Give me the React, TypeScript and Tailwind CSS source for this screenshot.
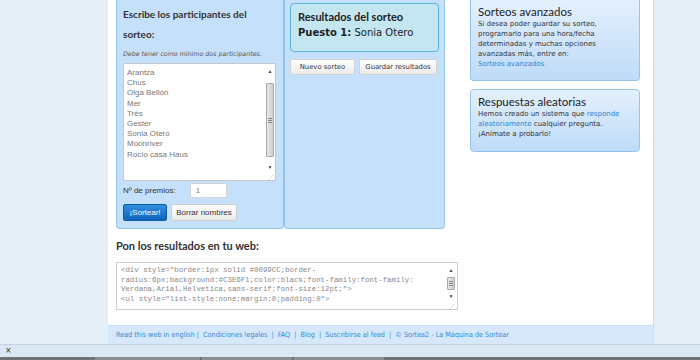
import React from 'react'

// Sorteo page, scrolled view: panels, side boxes, embed code and footer

const names = ['Arantza', 'Chus', 'Olga Bellón', 'Mer', 'Très', 'Gester', 'Sonia Otero', 'Moonriver', 'Rocío casa Haus']

const codeLines = [
  '<div style="border:1px solid #0099CC;border-',
  'radius:6px;background:#C3E6F1;color:black;font-family:font-family:',
  'Verdana,Arial,Helvetica,sans-serif;font-size:12pt;">',
  '<ul style="list-style:none;margin:0;padding:0">',
]

function ScrollBar({ thumbTop, thumbH, total }: { thumbTop: number; thumbH: number; total: number }) {
  return (
    <div className="flex w-[10px] flex-col items-center" style={{ height: total }}>
      <div className="flex h-[10px] w-[10px] items-center justify-center text-[5px] leading-none text-[#444]">▲</div>
      <div className="relative w-[10px] flex-1">
        <div
          className="absolute left-[1px] right-[1px] flex items-center justify-center rounded-[1px] border border-[#a9a9a9] bg-gradient-to-r from-[#e8e8e8] to-[#cfcfcf]"
          style={{ top: thumbTop, height: thumbH }}
        >
          <div className="flex flex-col gap-[1px]">
            <div className="h-[1px] w-[4px] bg-[#888]" />
            <div className="h-[1px] w-[4px] bg-[#888]" />
            <div className="h-[1px] w-[4px] bg-[#888]" />
          </div>
        </div>
      </div>
      <div className="flex h-[10px] w-[10px] items-center justify-center text-[5px] leading-none text-[#444]">▼</div>
      <div className="flex h-[8px] w-[10px] items-end justify-end pr-[1px] text-[6px] leading-none text-[#aaa]">⋰</div>
    </div>
  )
}

export default function App() {
  const verdana = { fontFamily: '"DejaVu Sans", Verdana, sans-serif' }
  const head = { fontFamily: 'Lato, "Open Sans", sans-serif' }
  const arial = { fontFamily: '"Liberation Sans", Arial, sans-serif' }

  return (
    <div className="flex h-[360px] w-[700px] flex-col overflow-hidden bg-[#e4eef7]">
      <div className="flex h-[344px]">
        <div className="w-[108px]" />
        <div className="flex w-[546px] flex-col border-r border-[#c9def2] bg-white">
          {/* main */}
          <div className="flex h-[325px] flex-col pl-[8px]">
            <div className="flex">
              {/* participantes */}
              <div className="flex h-[229px] w-[168px] flex-col rounded-b-[4px] border border-t-0 border-[#94c3ec] bg-[#c5e0fa] px-[6px]">
                <div className="pt-[4px] text-[10px] font-bold leading-[20px] text-[#333]" style={head}>
                  Escribe los participantes del
                  <br />
                  sorteo:
                </div>
                <div className="mt-[5px] whitespace-nowrap text-[6.3px] italic leading-[10px] text-[#555]" style={verdana}>
                  Debe tener como mínimo dos participantes.
                </div>
                <div className="mt-[4px] flex h-[118px] w-[153px] border border-[#c8c8c8] bg-white">
                  <div className="flex-1 pl-[3px] pt-[4px] text-[8px] leading-[10.2px] text-[#777]" style={arial}>
                    {names.map((n) => (
                      <div key={n}>{n}</div>
                    ))}
                  </div>
                  <div className="pt-[2px]">
                    <ScrollBar thumbTop={7} thumbH={74} total={114} />
                  </div>
                </div>
                <div className="mt-[2px] flex items-center gap-[14px]" style={arial}>
                  <span className="text-[8px] text-[#333]">Nº de premios:</span>
                  <div className="flex h-[15px] w-[37px] items-center border border-[#d4d4d4] bg-white pl-[5px] text-[8px] text-[#888]">1</div>
                </div>
                <div className="mt-[6px] flex gap-[4px]" style={arial}>
                  <div className="flex h-[17px] w-[44px] items-center justify-center rounded-[2px] border border-[#0d5aa8] bg-gradient-to-b from-[#2f8ee0] to-[#0f63bd] text-[8px] text-white">
                    ¡Sortear!
                  </div>
                  <div className="flex h-[17px] w-[66px] items-center justify-center rounded-[2px] border border-[#cfcfcf] bg-gradient-to-b from-white to-[#e9e9e9] text-[8px] text-[#333]">
                    Borrar nombres
                  </div>
                </div>
              </div>
              {/* resultados */}
              <div className="flex h-[229px] w-[161px] flex-col rounded-b-[4px] border border-t-0 border-[#94c3ec] bg-[#c5e0fa] px-[5px] pt-[3px]">
                <div className="flex h-[49px] flex-col rounded-[4px] border border-[#5db6dd] bg-[#c3e6f1] px-[7px] pt-[6px] text-[#222]">
                  <div className="text-[11px] font-bold leading-[14px]" style={head}>
                    Resultados del sorteo
                  </div>
                  <div className="mt-[2px] text-[10px] leading-[14px]" style={verdana}>
                    <b>Puesto 1:</b> Sonia Otero
                  </div>
                </div>
                <div className="mt-[7px] flex gap-[4px]" style={verdana}>
                  <div className="flex h-[16px] w-[65px] items-center justify-center rounded-[2px] border border-[#d2d2d2] bg-gradient-to-b from-white to-[#ebebeb] text-[6.8px] text-[#333]">
                    Nuevo sorteo
                  </div>
                  <div className="flex h-[16px] w-[78px] items-center justify-center rounded-[2px] border border-[#d2d2d2] bg-gradient-to-b from-white to-[#ebebeb] text-[6.8px] text-[#333]">
                    Guardar resultados
                  </div>
                </div>
              </div>
              <div className="w-[25px]" />
              {/* side */}
              <div className="flex w-[170px] flex-col gap-[8px]">
                <div className="h-[81px] rounded-b-[4px] border border-t-0 border-[#96c4ee] bg-gradient-to-b from-[#e3f0fd] to-[#bedbf8] px-[7px] pt-[5px]">
                  <div className="text-[11.5px] leading-[14px] text-[#222]" style={head}>
                    Sorteos avanzados
                  </div>
                  <div className="text-[7px] leading-[10px] text-[#333]" style={verdana}>
                    Si desea poder guardar su sorteo, programarlo para una hora/fecha determinadas y muchas opciones avanzadas más, entre en:
                    <br />
                    <span className="text-[#2a86d6]">Sorteos avanzados</span>
                  </div>
                </div>
                <div className="h-[63px] rounded-[4px] border border-[#96c4ee] bg-gradient-to-b from-[#e3f0fd] to-[#bedbf8] px-[7px] pt-[5px]">
                  <div className="text-[11.5px] leading-[14px] text-[#222]" style={head}>
                    Respuestas aleatorias
                  </div>
                  <div className="text-[7px] leading-[10px] text-[#333]" style={verdana}>
                    Hemos creado un sistema que <span className="text-[#2a86d6]">responde</span>
                    <br />
                    <span className="text-[#2a86d6]">aleatoriamente</span> cualquier pregunta.
                    <br />
                    ¡Anímate a probarlo!
                  </div>
                </div>
              </div>
            </div>
            {/* embed */}
            <div className="mt-[10px] text-[11px] font-bold leading-[14px] text-[#333]" style={head}>
              Pon los resultados en tu web:
            </div>
            <div className="mt-[9px] flex h-[48px] w-[342px] border border-[#cdcdcd] bg-white">
              <div className="flex-1 pl-[4px] pt-[3px] text-[7.4px] leading-[9.5px] text-[#888]" style={{ fontFamily: '"Liberation Mono", "Courier New", monospace' }}>
                {codeLines.map((l) => (
                  <div key={l} className="whitespace-pre">{l}</div>
                ))}
              </div>
              <div className="pr-[1px] pt-[2px]">
                <ScrollBar thumbTop={2} thumbH={13} total={44} />
              </div>
            </div>
          </div>
          {/* footer */}
          <div className="flex h-[19px] items-center border-t border-[#c4dcf3] bg-[#d6e8fa] pl-[8px] text-[7.2px] text-[#3189d6]" style={{ fontFamily: 'Tahoma, "DejaVu Sans Condensed", "DejaVu Sans", sans-serif' }}>
            Read this web in english |&nbsp;&nbsp;Condiciones legales&nbsp;&nbsp;|&nbsp;&nbsp;FAQ&nbsp;&nbsp;|&nbsp;&nbsp;Blog&nbsp;&nbsp;|&nbsp;&nbsp;Suscribirse al feed&nbsp;&nbsp;|&nbsp;&nbsp;© Sortea2 - La Máquina de Sortear
          </div>
        </div>
      </div>
      {/* find bar */}
      <div className="flex h-[13px] items-center border-t border-[#c3d3e3] bg-[#dce8f4] pl-[5px] text-[8px] leading-none text-[#333]" style={verdana}>
        ×
      </div>
      <div className="flex h-[3px] bg-[#6f7378]">
        <div className="w-[95px]" />
        <div className="w-[105px] bg-[#8a8f95]" />
        <div className="w-[2px]" />
        <div className="w-[90px] bg-[#8a8f95]" />
        <div className="w-[2px]" />
        <div className="w-[90px] bg-[#8a8f95]" />
      </div>
    </div>
  )
}
